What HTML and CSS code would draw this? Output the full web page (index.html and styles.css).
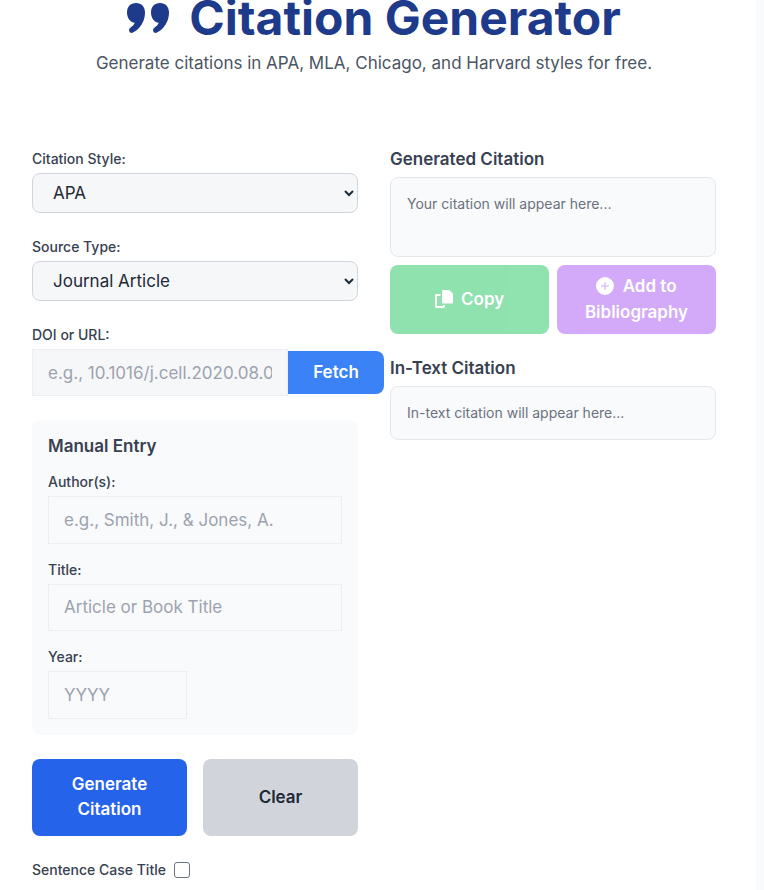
FILE: index.html
```html
<!DOCTYPE html>
<html lang="en">
<head>
<meta charset="utf-8">
<title>Citation Generator</title>
<link rel="stylesheet" href="styles.css">
</head>
<body>
<main class="card">
  <header class="header">
    <h1 class="title">
      <svg class="title-icon" viewBox="0 0 42 30" aria-hidden="true"><path d="M9 0C14.500 0 18 3.800 18 9.500C18 18.500 13 26 6 29.500C4.500 30.300 2.900 29.800 2.300 28.300C1.700 27 2.200 25.500 3.400 24.700C5.500 23.300 7 21.700 7.800 19.800C3.200 19.300 0 15 0 9.500C0 3.800 3.500 0 9 0ZM33 0C38.500 0 42 3.800 42 9.500C42 18.500 37 26 30 29.500C28.500 30.300 26.900 29.800 26.300 28.300C25.700 27 26.200 25.500 27.400 24.700C29.500 23.300 31 21.700 31.800 19.800C27.200 19.300 24 15 24 9.500C24 3.800 27.500 0 33 0Z"/></svg>
      Citation Generator
    </h1>
    <p class="subtitle">Generate citations in APA, MLA, Chicago, and Harvard styles for free.</p>
  </header>
  <div class="columns">
    <section class="col">
      <div class="field">
        <label class="label" for="style">Citation Style:</label>
        <select class="select" id="style"><option>APA</option><option>MLA</option><option>Chicago</option><option>Harvard</option></select>
      </div>
      <div class="field">
        <label class="label" for="source">Source Type:</label>
        <select class="select" id="source"><option>Journal Article</option><option>Book</option><option>Website</option></select>
      </div>
      <div class="field">
        <label class="label" for="doi">DOI or URL:</label>
        <div class="doi-row">
          <input class="input doi-input" id="doi" placeholder="e.g., 10.1016/j.cell.2020.08.001">
          <button class="btn fetch" type="button">Fetch</button>
        </div>
      </div>
      <div class="manual">
        <h3 class="manual-title">Manual Entry</h3>
        <div class="manual-field">
          <label class="label" for="author">Author(s):</label>
          <input class="input" id="author" placeholder="e.g., Smith, J., &amp; Jones, A.">
        </div>
        <div class="manual-field">
          <label class="label" for="work">Title:</label>
          <input class="input" id="work" placeholder="Article or Book Title">
        </div>
        <div class="manual-field">
          <label class="label" for="year">Year:</label>
          <input class="input year" id="year" placeholder="YYYY">
        </div>
      </div>
      <div class="actions">
        <button class="btn primary" type="button">Generate Citation</button>
        <button class="btn clear" type="button">Clear</button>
      </div>
      <div class="check-row">
        <label class="check-label" for="sentence">Sentence Case Title</label>
        <input class="check" id="sentence" type="checkbox">
      </div>
    </section>
    <section class="col">
      <h3 class="result-title">Generated Citation</h3>
      <div class="output tall">Your citation will appear here...</div>
      <div class="result-actions">
        <button class="btn copy" type="button">
          <svg class="btn-icon" viewBox="0 0 18 18" aria-hidden="true"><path d="M7 1.500C7 .7 7.700 0 8.500 0H14L18 3.500V12C18 12.800 17.300 13.500 16.500 13.500H8.500C7.700 13.500 7 12.800 7 12Z"/><path d="M5.500 4V6H2V16H8V15H10V16.500C10 17.300 9.300 18 8.500 18H1.500C.7 18 0 17.300 0 16.500V5.500C0 4.700.7 4 1.500 4Z"/></svg>
          Copy
        </button>
        <button class="btn biblio" type="button">
          <svg class="btn-icon" viewBox="0 0 18 18" aria-hidden="true"><path fill-rule="evenodd" d="M9 0A9 9 0 1 1 9 18A9 9 0 1 1 9 0ZM8.500 5V8.500H5V9.500H8.500V13H9.500V9.500H13V8.500H9.500V5Z"/></svg>
          Add to Bibliography
        </button>
      </div>
      <h3 class="result-title">In-Text Citation</h3>
      <div class="output">In-text citation will appear here...</div>
    </section>
  </div>
</main>
</body>
</html>
```
FILE: styles.css
```css
* { box-sizing: border-box; }
html, body { margin: 0; height: 890px; overflow: hidden; }
body {
  background: #f9fafb;
  font-family: Inter, "Liberation Sans", sans-serif;
  color: #1f2937;
  line-height: 1.6;
}
.card {
  width: 756px;
  height: 902px;
  background: #fff;
  padding: 0 40px 0 32px;
  margin-top: -12px;
}
.header { text-align: center; margin-bottom: 72px; }
.title {
  margin: 0 0 2px;
  font-size: 48px;
  line-height: 60px;
  font-weight: 700;
  color: #1e3a8a;
  display: flex;
  justify-content: center;
  align-items: center;
  gap: 20px;
}
.title-icon { width: 42px; height: 30px; fill: #1e3a8a; }
.subtitle { margin: 0; font-size: 17px; line-height: 27px; color: #4b5563; }
.columns { display: grid; grid-template-columns: 326px 326px; gap: 32px; }
.col { min-width: 0; }
.field { margin-bottom: 24px; }
.label {
  display: block;
  font-size: 14px;
  line-height: 20px;
  font-weight: 500;
  color: #374151;
  margin-bottom: 4px;
}
.select {
  display: block;
  width: 100%;
  height: 40px;
  padding: 0 16px;
  background: #f6f7f9;
  border: 1px solid #d1d5db;
  border-radius: 8px;
  font: 17px Inter, "Liberation Sans", sans-serif;
  color: #1f2937;
}
.input {
  display: block;
  width: 100%;
  height: 47.5px;
  padding: 12px 15px;
  background: #f9fafb;
  border: 1px solid #eceef1;
  border-radius: 0;
  font: 17px Inter, "Liberation Sans", sans-serif;
  color: #1f2937;
}
.input::placeholder { color: #9ca3af; opacity: 1; }
.doi-row { display: flex; align-items: center; width: 352px; height: 47px; }
.doi-input { width: 256px; flex: none; background: #f6f7f9; }
.btn {
  border: 0;
  font: 600 17px/25.6px Inter, "Liberation Sans", sans-serif;
  border-radius: 8px;
}
.fetch {
  width: 96px;
  height: 43px;
  flex: none;
  background: #3b82f6;
  color: #fff;
  border-radius: 0 8px 8px 0;
}
.manual {
  background: #f9fafb;
  border-radius: 8px;
  padding: 16px 16px 16.5px;
  display: flex;
  flex-direction: column;
  gap: 16px;
}
.manual-title {
  margin: 0;
  font-size: 17px;
  line-height: 20px;
  font-weight: 600;
  color: #374151;
}
.year { width: 139px; }
.actions { display: grid; grid-template-columns: 1fr 1fr; gap: 16px; margin-top: 24px; }
.primary { height: 76.8px; background: #2563eb; color: #fff; padding: 0 16px; }
.clear { height: 76.8px; background: #d1d5db; color: #1f2937; }
.check-row { display: flex; align-items: center; gap: 8px; margin-top: 24px; }
.check-label { font-size: 14px; line-height: 20px; font-weight: 500; color: #374151; }
.check {
  appearance: none;
  width: 16px;
  height: 16px;
  margin: 0;
  background: #fff;
  border: 1px solid #6b7280;
  border-radius: 3px;
}
.result-title {
  margin: 0 0 8px;
  font-size: 17px;
  line-height: 20px;
  font-weight: 600;
  color: #374151;
}
.output {
  background: #f9fafb;
  border: 1px solid #e5e7eb;
  border-radius: 8px;
  padding: 15px 16px;
  font-size: 14px;
  line-height: 22.4px;
  color: #6b7280;
  min-height: 54px;
}
.tall { height: 80px; }
.result-actions { display: grid; grid-template-columns: 1fr 1fr; gap: 8px; margin: 8px 0 24px; }
.copy, .biblio { height: 69px; padding: 0 16px; color: #fff; opacity: .5; }
.copy { background: #22c55e; }
.biblio { background: #a855f7; }
.btn-icon { width: 18px; height: 18px; fill: #fff; vertical-align: -3px; margin-right: 4px; }
```
